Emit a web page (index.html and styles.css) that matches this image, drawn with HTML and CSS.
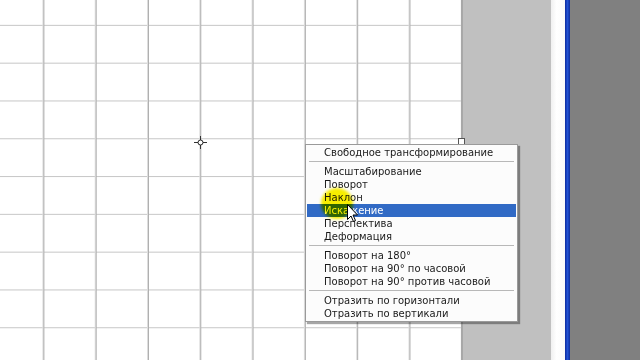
FILE: index.html
```html
<!DOCTYPE html>
<html>

<head>
    <title>Трансформирование</title>
    <link rel="stylesheet" href="styles.css">
</head>

<body>
    <div class="workspace">
        <div class="canvas">
            <svg class="pivot" width="13" height="13" viewBox="0 0 13 13">
                <line x1="6.5" y1="0" x2="6.5" y2="13" stroke="#333" stroke-width="1"/>
                <line x1="0" y1="6.5" x2="13" y2="6.5" stroke="#333" stroke-width="1"/>
                <circle cx="6.5" cy="6.5" r="2.5" fill="#fff" stroke="#222" stroke-width="1"/>
            </svg>
            <div class="handle"></div>

            <ul class="context-menu">
                <li>Свободное трансформирование</li>
                <li class="sep"></li>
                <li>Масштабирование</li>
                <li>Поворот</li>
                <li>Наклон</li>
                <li class="active">Искажение</li>
                <li>Перспектива</li>
                <li>Деформация</li>
                <li class="sep"></li>
                <li>Поворот на 180°</li>
                <li>Поворот на 90° по часовой</li>
                <li>Поворот на 90° против часовой</li>
                <li class="sep"></li>
                <li>Отразить по горизонтали</li>
                <li>Отразить по вертикали</li>
            </ul>

            <div class="spot"></div>
            <svg class="cursor" width="12" height="19" viewBox="0 0 12 19">
                <path d="M0.5 0.5 L0.5 15.5 L4 12 L6.5 17.5 L8.5 16.5 L6 11 L10.5 11 Z" fill="#fff" stroke="#000" stroke-width="1" stroke-linejoin="miter"/>
            </svg>
        </div>
        <div class="pasteboard"></div>
        <div class="frame-edge"></div>
        <div class="frame-line"></div>
        <div class="desk"></div>
    </div>
</body>

</html>
```

FILE: styles.css
```css
/* Photoshop-style workspace */
html,
body {
    margin: 0;
    padding: 0;
    height: 100%;
    overflow: hidden;
}

body {
    font-family: "DejaVu Sans", Tahoma, sans-serif;
}

.workspace {
    display: flex;
    width: 640px;
    height: 360px;
}

/* canvas with the grid drawn as a background */
.canvas {
    position: relative;
    width: 461px;
    flex: none;
    border-right: 2px solid #a8a8a8;
    background-color: #fff;
    background-image:
        linear-gradient(to right, transparent 42px, #dcdcdc 42px, #dcdcdc 43px, #b0b0b0 43px, #b0b0b0 44px, transparent 44px),
        linear-gradient(to bottom, transparent 24.5px, #c6c6c6 24.5px, #c6c6c6 25.5px, transparent 25.5px);
    background-size: 52.3px 100%, 100% 37.8px;
    background-repeat: repeat-x, repeat-y;
}

.pasteboard {
    width: 88px;
    flex: none;
    background: #c0c0c0;
}

.frame-edge {
    width: 14px;
    flex: none;
    background: linear-gradient(to right, #f0f0f0, #fff 40%, #fafafa);
}

.frame-line {
    width: 5px;
    flex: none;
    background: linear-gradient(to right, #0b2a9e, #2352d4 50%, #0d2c9c);
}

.desk {
    flex: 1;
    background: #808080;
}

.pivot {
    position: absolute;
    left: 194px;
    top: 136px;
}

.handle {
    position: absolute;
    left: 458px;
    top: 138px;
    width: 5px;
    height: 6px;
    border: 1px solid #555;
    border-bottom: none;
    background: #fff;
}

.context-menu {
    position: absolute;
    left: 305px;
    top: 144px;
    width: 209px;
    margin: 0;
    padding: 1px;
    list-style: none;
    background: #fcfcfc;
    border: 1px solid #9a9a9a;
    box-shadow: 2px 2px 1px rgba(0, 0, 0, 0.35);
    font-size: 10px;
    color: #1a1a1a;
}

.context-menu li {
    height: 13px;
    line-height: 13px;
    padding-left: 17px;
    white-space: nowrap;
}

.context-menu li.sep {
    height: 6px;
    padding: 0;
    position: relative;
}

.context-menu li.sep::after {
    content: "";
    position: absolute;
    left: 2px;
    right: 2px;
    top: 2px;
    border-top: 1px solid #b8b8b8;
}

.context-menu li.active {
    background: #316ac5;
    color: #fff;
}

/* cursor highlight from the screen recorder */
.spot {
    position: absolute;
    left: 321px;
    top: 188px;
    width: 32px;
    height: 31px;
    border-radius: 50%;
    background: rgb(250, 240, 0);
    mix-blend-mode: multiply;
    filter: blur(1.5px);
}

.cursor {
    position: absolute;
    left: 347px;
    top: 204px;
}
```
